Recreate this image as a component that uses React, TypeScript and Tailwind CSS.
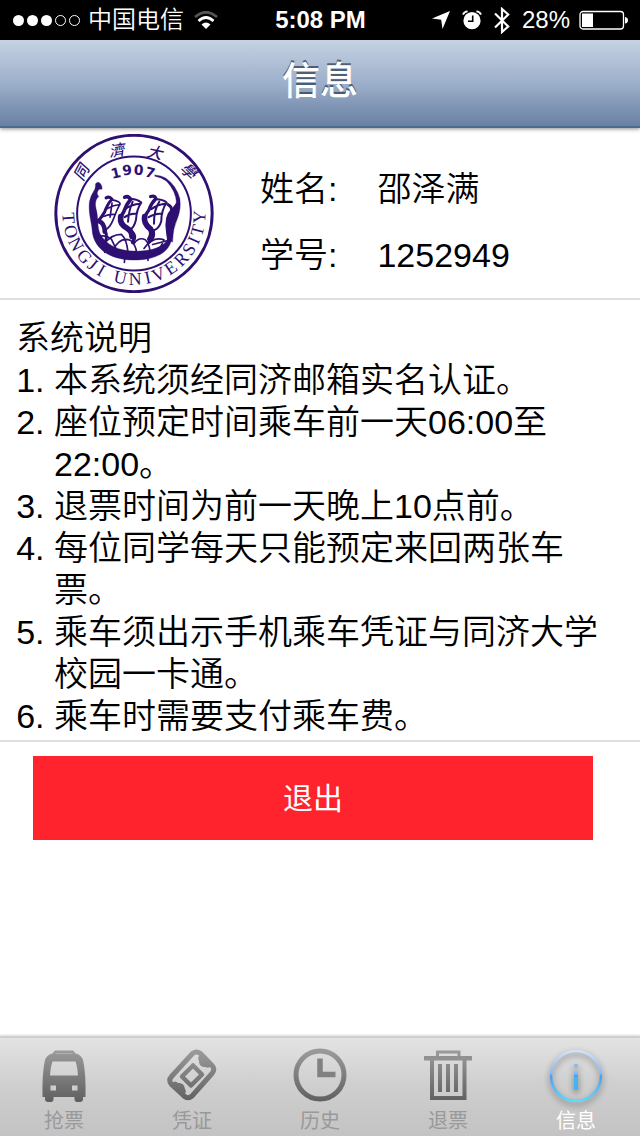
import React from "react";

const INK = "#2e0f72";

const ringLetters: [string, number][] = [
  ["T", 86], ["O", 74], ["N", 62], ["G", 49], ["J", 39], ["I", 30],
  ["U", 12], ["N", -1], ["I", -12], ["V", -22], ["E", -34], ["R", -46],
  ["S", -57], ["I", -66], ["T", -75], ["Y", -87],
];

const ringCharacters: [string, number, number, number][] = [
  ["同", 112, 138, -62],
  ["濟", 218, 72, -8],
  ["大", 332, 78, 12],
  ["學", 433, 133, 44],
];

const yearDigits: [string, number, number, number][] = [
  ["1", 215, 139, -14],
  ["9", 249, 130, -6],
  ["0", 284, 130, 4],
  ["7", 319, 138, 14],
];

function Seal() {
  return (
    <svg viewBox="30 22 480 478" className="h-[159px] w-40 shrink-0" role="img" aria-label="同濟大學">
      <circle cx="270" cy="261" r="235" fill="#fff" stroke={INK} strokeWidth="9" />
      <circle cx="270" cy="261" r="171" fill="none" stroke={INK} strokeWidth="6" />
      {ringCharacters.map(([c, x, y, r]) => (
        <text
          key={c}
          transform={`translate(${x} ${y}) rotate(${r})`}
          textAnchor="middle"
          dy="16"
          fontSize="46"
          fill={INK}
          className="font-['Noto_Sans_CJK_TC',sans-serif] font-medium italic"
        >
          {c}
        </text>
      ))}
      {yearDigits.map(([c, x, y, r]) => (
        <text
          key={c}
          transform={`translate(${x} ${y}) rotate(${r})`}
          textAnchor="middle"
          dy="15"
          fontSize="42"
          fill={INK}
          className="font-['DejaVu_Sans',sans-serif] font-bold"
        >
          {c}
        </text>
      ))}
      {ringLetters.map(([c, a], i) => (
        <text
          key={i}
          transform={`rotate(${a} 270 261)`}
          x="270"
          y="476"
          textAnchor="middle"
          fontSize="54"
          fill={INK}
          className="font-['Liberation_Serif',serif]"
        >
          {c}
        </text>
      ))}
      <g transform="translate(120 102)" fill={INK} stroke={INK} strokeLinecap="round" strokeLinejoin="round">
        <path strokeWidth="1" d="M28 94 Q36 82 34 70 Q42 60 50 70 Q55 78 54 86 Q44 84 41 92 Q37 100 44 108 Q30 120 36 145 C44 172 38 198 48 220 C64 252 104 272 150 272 C200 274 240 260 252 236 L262 240 C254 276 214 299 150 299 C84 299 34 270 25 218 C23 184 12 160 16 124 Q20 104 28 94Z" />
        <path strokeWidth="1" d="M213 43 Q232 45 245 52 Q278 75 288 115 Q292 145 282 170 Q266 205 266 245 L250 240 Q244 200 256 168 Q262 142 278 128 Q276 92 248 62 Q232 50 213 47Z" />
        <g fill="none">
          <path strokeWidth="9" d="M66 112 Q76 106 84 116 Q70 130 62 154 Q52 170 44 180 M44 180 Q60 192 66 218 Q70 236 60 250" />
          <path strokeWidth="14" d="M44 182 Q62 188 62 214" />
          <path strokeWidth="5" d="M84 118 Q108 122 108 130 Q98 148 88 176 Q78 202 62 210 M70 144 Q88 134 108 132 M58 168 Q76 160 94 162 M84 128 L78 170" />
          <path strokeWidth="11" d="M122 110 Q132 104 140 116 Q128 130 120 152 Q108 170 110 188 Q120 200 142 214 Q158 226 146 246" />
          <path strokeWidth="17" d="M110 168 Q106 192 130 204 Q144 212 144 228" />
          <path strokeWidth="6" d="M138 116 Q156 114 172 126 Q158 144 156 178 Q150 202 138 208 M126 144 Q144 132 168 130 M122 170 Q138 158 156 160 M146 124 Q134 150 132 184" />
          <path strokeWidth="10" d="M200 108 Q212 104 216 114 Q202 128 194 150 Q178 170 182 186 Q200 200 208 214 Q212 232 194 246" />
          <path strokeWidth="17" d="M182 168 Q178 190 200 206 Q208 220 198 236" />
          <path strokeWidth="6" d="M216 116 Q238 116 248 126 Q232 150 232 182 Q226 204 208 210 M202 146 Q222 132 246 130 M194 170 Q214 158 232 160 M226 124 Q210 146 210 190" />
          <path strokeWidth="9" d="M252 132 Q272 144 256 160 Q242 186 256 240" />
          <path strokeWidth="5" d="M278 128 Q264 170 264 230" />
          <path strokeWidth="5" d="M42 230 Q62 220 82 236 Q94 260 100 276 M60 252 Q80 222 112 222 Q128 236 132 276 M86 270 Q108 226 140 240 Q156 254 158 278 M150 250 Q164 228 184 238 Q196 250 198 272 M180 264 Q208 226 240 238 Q232 260 220 270 M62 250 L62 276 M124 278 L121 306 M192 276 L192 300 M206 252 L252 240" />
        </g>
      </g>
    </svg>
  );
}

function StatusBar() {
  return (
    <div className="grid h-10 grid-cols-[1fr_auto_1fr] items-center bg-black pr-3 pl-[13px] text-2xl leading-10 text-white">
      <div className="flex items-center">
        <div className="flex gap-[3px]">
          <span className="size-[11px] rounded-full bg-white" />
          <span className="size-[11px] rounded-full bg-white" />
          <span className="size-[11px] rounded-full bg-white" />
          <span className="size-[11px] rounded-full border border-white" />
          <span className="size-[11px] rounded-full border border-white" />
        </div>
        <span className="ml-2 font-[350]">中国电信</span>
        <svg viewBox="0 0 24 18" className="ml-2.5 h-[18px] w-6" fill="none" aria-hidden="true">
          <path d="M1 6 Q12 -3.5 23 6" stroke="#555" strokeWidth="2.8" />
          <path d="M4.5 10 Q12 3 19.5 10" stroke="#fff" strokeWidth="2.8" />
          <path d="M7.5 13.5 Q12 9.5 16.5 13.5 L12 18Z" fill="#fff" />
        </svg>
      </div>
      <span className="font-bold">5:08 PM</span>
      <div className="flex items-center justify-end">
        <svg viewBox="0 0 18 18" className="h-[18px] w-[18px]" fill="#fff" aria-hidden="true">
          <path d="M18 0 L10.5 18 L9.2 8.8 L0 7.5Z" />
        </svg>
        <svg viewBox="0 0 20 20" className="ml-3 size-5" fill="none" aria-hidden="true">
          <circle cx="10" cy="10.7" r="8.6" fill="#fff" />
          <path d="M1 4.6 Q2 1.6 5.6 1.3 M14.4 1.3 Q18 1.6 19 4.6" stroke="#fff" strokeWidth="1.8" />
          <path d="M10.7 5.5 V11.2 H6" stroke="#000" strokeWidth="1.6" />
        </svg>
        <svg viewBox="0 0 16 27" className="ml-3 h-[27px] w-4" fill="none" aria-hidden="true">
          <path d="M1 6.5 L14.2 19.5 L8 25 V2 L14.2 7.5 L1 20.5" stroke="#fff" strokeWidth="2.2" />
        </svg>
        <span className="ml-3">28%</span>
        <svg viewBox="0 0 50 20" className="ml-2 h-5 w-[50px]" fill="none" aria-hidden="true">
          <rect x="2" y="1.5" width="43.5" height="17.5" rx="3" stroke="#fff" strokeWidth="1.3" />
          <rect x="4" y="3.5" width="11" height="13.500" fill="#fff" />
          <path d="M47 7 Q50 7.500 50 10.200 Q50 13 47 13.500Z" fill="#fff" />
        </svg>
      </div>
    </div>
  );
}

function IconGradient({ id }: { id: string }) {
  return (
    <defs>
      <linearGradient id={id} x1="0" y1="4" x2="0" y2="56" gradientUnits="userSpaceOnUse">
        <stop offset="0" stopColor="#9a9a9a" />
        <stop offset="1" stopColor="#5e5e5e" />
      </linearGradient>
    </defs>
  );
}

const iconClass = "size-14";

function BusIcon() {
  return (
    <svg viewBox="0 0 56 56" className={iconClass} aria-hidden="true">
      <IconGradient id="bus" />
      <path
        fill="url(#bus)"
        fillRule="evenodd"
        d="M19 3.500 H37 L39.500 6.500 Q45 7.500 47 13 Q50 26 49.500 50 H47 V52 Q47 55 44 55 H41 Q38.500 55 38.500 52 V50 H17.500 V52 Q17.500 55 15 55 H12 Q9 55 9 52 V50 H6.500 Q6 26 9 13 Q11 7.500 16.500 6.500Z M16.500 14.500 Q14.500 20 14 28.500 H42 Q41.500 20 39.500 14.500Z M14.500 38.500 V43.500 H20 V38.500Z M36 38.500 V43.500 H41.500 V38.500Z"
      />
      <path d="M19.500 6.500 H36.500" stroke="#b0b0b0" strokeWidth="1" />
    </svg>
  );
}

function TicketIcon() {
  return (
    <svg viewBox="0 0 56 56" className={iconClass} fill="none" aria-hidden="true">
      <IconGradient id="ticket" />
      <g stroke="url(#ticket)" strokeLinejoin="round">
        <path strokeWidth="5" d="M28.500 6.500 Q32.500 3.500 36.500 6.500 L48 18.500 Q51.500 22 48 26.500 L28 49 Q24 52.500 20 49 L7.500 37.500 Q4 33.500 7.500 29.500Z" />
        <path strokeWidth="4.500" d="M29 18.500 L38 27.500 L27 38.500 L18 29.500Z" />
      </g>
      <path fill="url(#ticket)" d="M36 8 L47 19 Q45 22 41 20 Q35 20 35 14 Q33 10 36 8Z M8 36 L20 48 Q23 45 21 42 Q20 35 14 36 Q11 33 8 36Z" />
    </svg>
  );
}

function ClockIcon() {
  return (
    <svg viewBox="0 0 56 56" className={iconClass} fill="none" aria-hidden="true">
      <IconGradient id="clock" />
      <circle cx="28" cy="28" r="24" stroke="url(#clock)" strokeWidth="5" />
      <path d="M28 11.500 V27.500 H43.500" stroke="#818181" strokeWidth="5.500" />
    </svg>
  );
}

function TrashIcon() {
  return (
    <svg viewBox="0 0 56 56" className={iconClass} fill="none" aria-hidden="true">
      <IconGradient id="trash" />
      <g stroke="url(#trash)">
        <path strokeWidth="3" d="M17.500 10 V5 H39 V10" />
        <path strokeWidth="4" d="M12 12 V51 H44.500 V12" />
        <path strokeWidth="4" d="M20 17 V45 M28 17 V45 M36 17 V45" />
      </g>
      <path d="M4 9 H52 V13.500 H4Z" fill="#919191" />
    </svg>
  );
}

function InfoIcon() {
  return (
    <svg viewBox="0 0 56 56" className={`${iconClass} drop-shadow-[0_3px_3px_rgba(0,0,0,0.45)]`} fill="none" aria-hidden="true">
      <defs>
        <linearGradient id="info" x1="0" y1="3" x2="0" y2="55" gradientUnits="userSpaceOnUse">
          <stop offset="0" stopColor="#d3e4f8" />
          <stop offset="0.45" stopColor="#8bb9ed" />
          <stop offset="0.5" stopColor="#4b9df0" />
          <stop offset="1" stopColor="#5ddcff" />
        </linearGradient>
      </defs>
      <circle cx="28" cy="29" r="25" stroke="url(#info)" strokeWidth="2.500" />
      <path d="M26 17 H30 V21 H26Z" fill="#8dbdf0" />
      <path d="M26 24 H30 V43 H26Z" fill="url(#info)" />
      <path d="M26 30 H30 V43 H26Z" fill="#42b6f5" />
    </svg>
  );
}

const tabs = [
  { label: "抢票", Icon: BusIcon },
  { label: "凭证", Icon: TicketIcon },
  { label: "历史", Icon: ClockIcon },
  { label: "退票", Icon: TrashIcon },
  { label: "信息", Icon: InfoIcon, active: true },
];

const rules = [
  "本系统须经同济邮箱实名认证。",
  "座位预定时间乘车前一天06:00至22:00。",
  "退票时间为前一天晚上10点前。",
  "每位同学每天只能预定来回两张车票。",
  "乘车须出示手机乘车凭证与同济大学校园一卡通。",
  "乘车时需要支付乘车费。",
];

export default function App() {
  return (
    <div
      lang="zh-CN"
      className="flex min-h-screen flex-col bg-white font-['Liberation_Sans','Noto_Sans_CJK_SC',sans-serif] text-black"
    >
      <StatusBar />
      <header className="flex h-[88px] items-center justify-center border-b-2 border-[#4c6a8f] bg-linear-to-b from-[#c5d2e2] via-[#9dafcb] to-[#6981a3] pb-1 shadow-[0_1px_4px_rgba(0,0,0,0.45)]">
        <h1 className="text-[38px] leading-[48px] font-medium text-white [text-shadow:0_-2px_0_rgba(50,65,85,0.75)]">信息</h1>
      </header>

      <main className="flex-1">
        <section className="flex items-center border-b-2 border-[#dedede] pt-1.5 pb-[5px] pl-[54px]">
          <Seal />
          <dl className="ml-[46px] grid grid-cols-[auto_1fr] gap-x-10 gap-y-6 pt-4 text-[34px] leading-[42px] font-[350]">
            <dt>姓名:</dt>
            <dd>邵泽满</dd>
            <dt>学号:</dt>
            <dd>1252949</dd>
          </dl>
        </section>

        <section className="border-b-2 border-[#dedede] pt-[17px] pr-4 pb-[3px] text-[34px] leading-[42px] font-[350]">
          <h2 className="pl-4">系统说明</h2>
          <ol className="list-outside list-decimal pl-[54px]">
            {rules.map((rule) => (
              <li key={rule}>{rule}</li>
            ))}
          </ol>
        </section>

        <div className="pt-3.5 pr-[47px] pb-6 pl-[33px]">
          <button type="button" className="block h-[84px] w-full bg-[#ff232e] text-[30px] text-white">
            退出
          </button>
        </div>
      </main>

      <nav className="grid grid-cols-5 border-t-2 border-[#cfcfcf] bg-linear-to-b from-[#e3e3e3] via-[#cecece] via-50% to-[#c3c3c3] pt-[9px] shadow-[0_-1px_2px_rgba(0,0,0,0.15)]">
        {tabs.map(({ label, Icon, active }) => (
          <button
            key={label}
            type="button"
            aria-current={active ? "page" : undefined}
            className={`flex flex-col items-center pb-px text-xl leading-7 ${active ? "text-white" : "text-[#999]"}`}
          >
            <Icon />
            <span className="pt-1">{label}</span>
          </button>
        ))}
      </nav>
    </div>
  );
}
